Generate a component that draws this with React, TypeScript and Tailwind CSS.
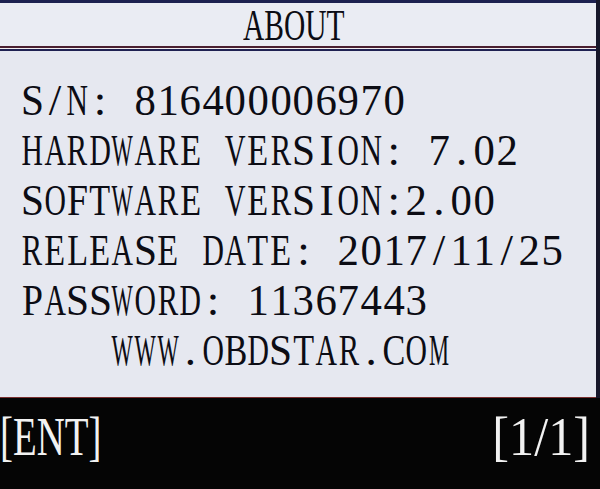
import React from "react";

const lines = [
  "S/N: 816400006970",
  "HARDWARE VERSION: 7.02",
  "SOFTWARE VERSION:2.00",
  "RELEASE DATE: 2017/11/25",
  "PASSWORD: 11367443",
  "    WWW.OBDSTAR.COM",
];

const glyphScale: Record<string, string> = {
  M: "scale-x-[0.5]",
  W: "scale-x-[0.5]",
  A: "scale-x-[0.66]",
  D: "scale-x-[0.66]",
  H: "scale-x-[0.66]",
  N: "scale-x-[0.66]",
  O: "scale-x-[0.66]",
  R: "scale-x-[0.68]",
  V: "scale-x-[0.64]",
  B: "scale-x-[0.76]",
  C: "scale-x-[0.76]",
  E: "scale-x-[0.76]",
  L: "scale-x-[0.76]",
  T: "scale-x-[0.76]",
  F: "scale-x-[0.84]",
  P: "scale-x-[0.84]",
  S: "scale-x-[0.92]",
  I: "scale-x-[0.95]",
};

function Cell({ ch }: { ch: string }) {
  const cls = glyphScale[ch] ?? (/[0-9]/.test(ch) ? "scale-x-[0.95]" : "scale-x-100");
  return (
    <span className="inline-flex w-[22.6px] justify-center overflow-visible">
      <span className={"inline-block leading-none whitespace-pre " + cls}>{ch}</span>
    </span>
  );
}

export default function App() {
  return (
    <div className="w-[600px] h-[489px] bg-[#050505] flex flex-col overflow-hidden">
      <div className="flex h-[398px]">
        <div className="w-[596px] flex flex-col bg-[#e6e8f0]">
          <div className="h-[3px] bg-[#1d2150]" />
          <div className="h-[43px] flex items-start justify-center pt-[1px] pr-[9px] bg-[#eaecf3]">
            <span
              className="inline-block leading-none text-[44px] text-[#0c0c14] scale-x-[0.67]"
              style={{ fontFamily: '"Liberation Serif", serif' }}
            >
              ABOUT
            </span>
          </div>
          <div className="h-[2px] bg-[#4a1f30]" />
          <div className="h-[1px] bg-[#f3f0f2]" />
          <div className="h-[2px] bg-[#1f2152]" />
          <div
            className="flex-1 flex flex-col pt-[27px] pl-[21px] text-[45px] text-[#0c0c14]"
            style={{ fontFamily: '"Liberation Serif", serif' }}
          >
            {lines.map((l) => (
              <div key={l} className="h-[50px] flex items-start">
                {Array.from(l).map((ch, i) => (
                  <Cell key={i} ch={ch} />
                ))}
              </div>
            ))}
          </div>
          <div className="h-[1px] bg-[#7a3030]" />
        </div>
        <div className="flex-1 bg-[#17172a]" />
      </div>
      <div
        className="flex-1 flex justify-between items-start pt-[12px] pl-0 pr-[10px] text-[54px] text-[#f2f2f2]"
        style={{ fontFamily: '"Liberation Serif", serif' }}
      >
        <span className="inline-block leading-none origin-left scale-x-[0.72]">[ENT]</span>
        <span className="inline-block leading-none origin-right scale-x-[0.93]">[1/1]</span>
      </div>
    </div>
  );
}
